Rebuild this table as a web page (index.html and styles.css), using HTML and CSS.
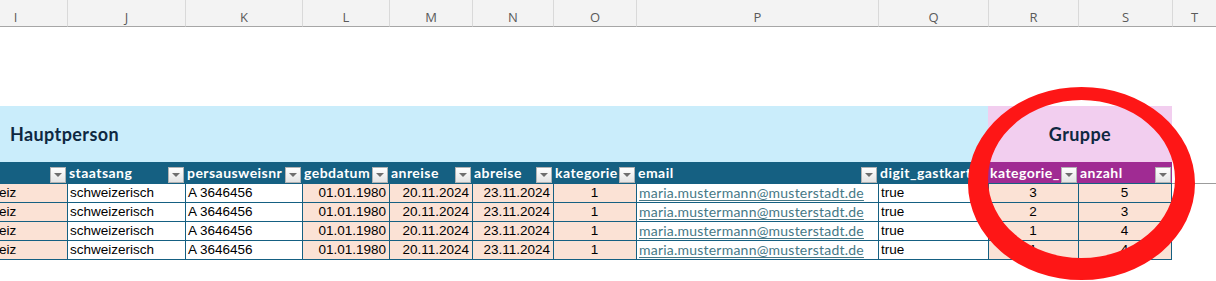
FILE: index.html
```html
<!DOCTYPE html>
<html>
<head>
<meta charset="utf-8">
<link rel="stylesheet" href="styles.css">
</head>
<body>
<div class="sheet">
  <div class="ch first">I</div><div class="ch">J</div><div class="ch">K</div><div class="ch">L</div><div class="ch">M</div><div class="ch">N</div><div class="ch">O</div><div class="ch">P</div><div class="ch">Q</div><div class="ch">R</div><div class="ch">S</div><div class="ch">T</div>

  <div class="gap"></div>

  <div class="band blue">Hauptperson</div>
  <div class="band pink">Gruppe</div>
  <div class="band"></div>

  <div class="th"><span class="t">land</span><span class="fb"></span></div>
  <div class="th"><span class="t">staatsang</span><span class="fb"></span></div>
  <div class="th"><span class="t">persausweisnr</span><span class="fb"></span></div>
  <div class="th"><span class="t">gebdatum</span><span class="fb"></span></div>
  <div class="th"><span class="t">anreise</span><span class="fb"></span></div>
  <div class="th"><span class="t">abreise</span><span class="fb"></span></div>
  <div class="th"><span class="t">kategorie</span><span class="fb"></span></div>
  <div class="th"><span class="t">email</span><span class="fb"></span></div>
  <div class="th"><span class="t">digit_gastkart</span><span class="fb"></span></div>
  <div class="th purple"><span class="t">kategorie_</span><span class="fb"></span></div>
  <div class="th purple"><span class="t">anzahl</span><span class="fb"></span></div>
  <div class="th-out"></div>

  <div class="td pe first">Schweiz</div><div class="td">schweizerisch</div><div class="td">A 3646456</div><div class="td pe r">01.01.1980</div><div class="td pe r">20.11.2024</div><div class="td pe r">23.11.2024</div><div class="td pe c">1</div><div class="td"><a class="mail">maria.mustermann@musterstadt.de</a></div><div class="td">true</div><div class="td pe c">3</div><div class="td pe c last">5</div><div class="out"></div>

  <div class="td pe first">Schweiz</div><div class="td">schweizerisch</div><div class="td">A 3646456</div><div class="td pe r">01.01.1980</div><div class="td pe r">20.11.2024</div><div class="td pe r">23.11.2024</div><div class="td pe c">1</div><div class="td"><a class="mail">maria.mustermann@musterstadt.de</a></div><div class="td">true</div><div class="td pe c">2</div><div class="td pe c last">3</div><div class="out"></div>

  <div class="td pe first">Schweiz</div><div class="td">schweizerisch</div><div class="td">A 3646456</div><div class="td pe r">01.01.1980</div><div class="td pe r">20.11.2024</div><div class="td pe r">23.11.2024</div><div class="td pe c">1</div><div class="td"><a class="mail">maria.mustermann@musterstadt.de</a></div><div class="td">true</div><div class="td pe c">1</div><div class="td pe c last">4</div><div class="out"></div>

  <div class="td pe first">Schweiz</div><div class="td">schweizerisch</div><div class="td">A 3646456</div><div class="td pe r">01.01.1980</div><div class="td pe r">20.11.2024</div><div class="td pe r">23.11.2024</div><div class="td pe c">1</div><div class="td"><a class="mail">maria.mustermann@musterstadt.de</a></div><div class="td">true</div><div class="td pe c">1</div><div class="td pe c last">4</div><div class="out"></div>
</div>

<svg class="mark" width="1216" height="281" viewBox="0 0 1216 281">
  <path fill="#fe1616" fill-rule="evenodd" d="M968 183.5 A113.5 96.5 0 1 0 1195 183.5 A113.5 96.5 0 1 0 968 183.5 Z M988 179 A93.5 79 0 1 0 1175 179 A93.5 79 0 1 0 988 179 Z"/>
</svg>
</body>
</html>
```

FILE: styles.css
```css
html, body {
  margin: 0;
  padding: 0;
  background: #ffffff;
}
body {
  width: 1216px;
  height: 281px;
  overflow: hidden;
  position: relative;
  font-family: "Liberation Sans", Arial, sans-serif;
}

.sheet {
  display: grid;
  grid-template-columns: 103px 118px 117px 87px 83px 81px 83px 242px 110px 90px 94px 1fr;
  margin-left: -36px;
  width: calc(100% + 36px);
}

/* column letters */
.ch {
  height: 27px;
  box-sizing: border-box;
  background: #f3f3f3;
  border-bottom: 1px solid #a6a6a6;
  border-left: 1px solid #d9d9d9;
  display: flex;
  justify-content: center;
  align-items: center;
  padding-top: 7px;
  font: 13px "Open Sans", sans-serif;
  color: #5a5a5a;
}
.ch.first { border-left: none; }

.gap {
  grid-column: 1 / -1;
  height: 79px;
}

/* title band */
.band {
  height: 56px;
  display: flex;
  align-items: center;
  font: bold 18px Lato, sans-serif;
  letter-spacing: 0.4px;
  color: #0e2841;
}
.band.blue {
  grid-column: 1 / span 9;
  background: #caedfb;
  padding-left: 46px;
}
.band.pink {
  grid-column: 10 / span 2;
  background: #f2ceef;
  justify-content: center;
}

/* table header */
.th {
  height: 22px;
  box-sizing: border-box;
  background: #156082;
  border-bottom: 1px solid #156082;
  color: #ffffff;
  font: bold 14px Lato, sans-serif;
  letter-spacing: 0.45px;
  display: flex;
  padding-left: 2px;
  white-space: nowrap;
  overflow: hidden;
}
.th.purple { background: #a02b93; }
.th .t {
  flex: 1;
  min-width: 0;
  overflow: hidden;
  line-height: 21px;
}
.fb {
  flex: none;
  width: 16px;
  height: 16px;
  box-sizing: border-box;
  align-self: flex-end;
  margin: 0 1px 0 0;
  border: 1px solid #b3b3b3;
  background: linear-gradient(#ffffff, #e4e4e4);
  position: relative;
}
.fb::after {
  content: "";
  position: absolute;
  left: 3px;
  top: 5px;
  border-left: 4px solid transparent;
  border-right: 4px solid transparent;
  border-top: 4px solid #6e6e6e;
}
.th-out {
  height: 22px;
  box-sizing: border-box;
  border-bottom: 1px solid #9c9c9c;
}

/* data cells */
.td {
  height: 19px;
  box-sizing: border-box;
  border-left: 1px solid #156082;
  border-bottom: 1px solid #156082;
  background: #ffffff;
  font-size: 13.5px;
  line-height: 18px;
  color: #000000;
  padding: 0 3px 0 2px;
  white-space: nowrap;
  overflow: hidden;
}
.td.first { border-left: none; }
.td.last { border-right: 1px solid #156082; }
.td.pe { background: #fbe2d5; }
.td.r { text-align: right; }
.td.c { text-align: center; }
.out { height: 19px; }

.mail {
  font-family: Lato, sans-serif;
  font-size: 14px;
  letter-spacing: 0.22px;
  color: #467886;
  text-decoration: underline;
  text-underline-offset: 2px;
}

/* annotation overlay */
.mark {
  position: absolute;
  left: 0;
  top: 0;
  pointer-events: none;
}
```
